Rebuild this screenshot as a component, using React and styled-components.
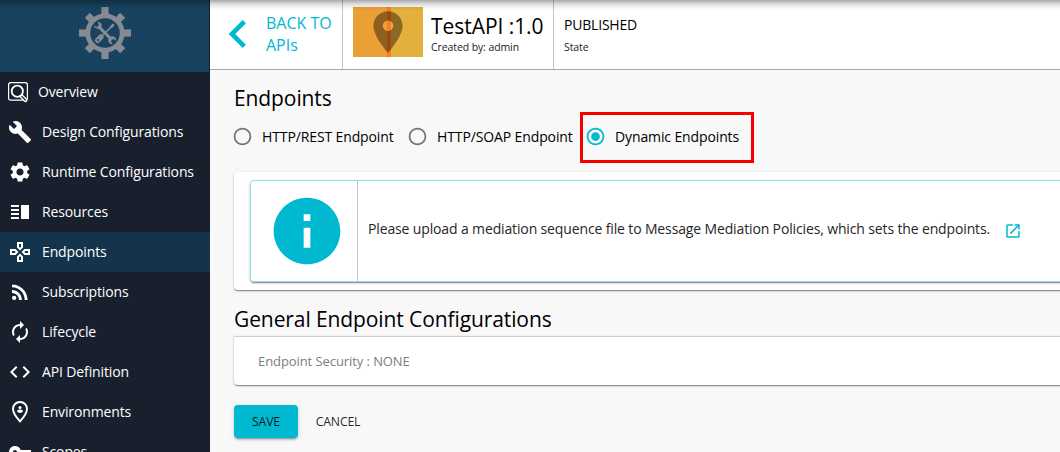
import React from 'react';
import styled, { createGlobalStyle } from 'styled-components';
import {
  MdBuild, MdSettings, MdVerticalSplit, MdOutlineGames, MdRssFeed, MdAutorenew, MdCode,
  MdVpnKey, MdInfo, MdLaunch, MdKeyboardArrowLeft, MdPlace,
  MdRadioButtonChecked, MdRadioButtonUnchecked,
} from 'react-icons/md';

const GlobalStyle = createGlobalStyle`
  * { box-sizing: border-box; }
  body {
    margin: 0;
    overflow: hidden;
    background: #f8f8f8;
    color: #000;
    font-family: "Open Sans", sans-serif;
  }
  svg { display: block; flex: none; }
`;

const Page = styled.div`
  position: relative;
  display: flex;
  height: 452px;
  overflow: hidden;
`;
const TopShade = styled.div`
  position: absolute;
  inset: 0 0 auto 0;
  height: 11px;
  background: linear-gradient(rgba(0, 0, 0, 0.34), rgba(0, 0, 0, 0.14) 35%, rgba(0, 0, 0, 0.03) 75%, transparent);
`;
const Sidebar = styled.nav`
  flex: none;
  width: 210px;
  background: #18202e;
`;
const Brand = styled.div`
  display: flex;
  justify-content: center;
  height: 72px;
  padding-top: 7px;
  background: #18425f;
  border-right: 1px solid #18202e;
`;
const NavItem = styled.a`
  display: flex;
  align-items: center;
  gap: ${(p) => p.$gap || 10}px;
  height: 40px;
  padding-left: 8px;
  font-size: 14px;
  line-height: 20px;
  letter-spacing: -0.13px;
  white-space: nowrap;
  color: #fff;
  background: ${(p) => (p.$active ? '#14344b' : 'transparent')};
`;
const Main = styled.main`
  flex: 1;
  min-width: 0;
`;
const Header = styled.header`
  display: flex;
  height: 70px;
  background: #fff;
  border-bottom: 1px solid #a6a6a6;
`;
const Back = styled.a`
  display: flex;
  align-items: center;
  width: 133px;
  padding-bottom: 2px;
  border-right: 1px solid #c4c4c4;
  color: #00b9d0;
  font-size: 16px;
  line-height: 22px;
`;
const ApiInfo = styled.div`
  display: flex;
  width: 211px;
  padding: 7px 0 0 10px;
  border-right: 1px solid #c4c4c4;
`;
const Thumb = styled.div`
  display: flex;
  justify-content: center;
  width: 70px;
  height: 50px;
  margin-right: 8px;
  background: linear-gradient(90deg, #eba035 34px, #ff7c22 34px 38px, #e4b03d 38px);
`;
const Stack = styled.div`
  display: flex;
  flex-direction: column;
  white-space: nowrap;
`;
const ApiName = styled.div`
  font-size: 21px;
  line-height: 28px;
  letter-spacing: -0.05px;
  margin-top: 5px;
`;
const State = styled.div`
  font-size: 14px;
  line-height: 20px;
  letter-spacing: -0.2px;
  margin-top: 15px;
`;
const Caption = styled.div`
  font-size: 10.5px;
  line-height: 16px;
  letter-spacing: -0.1px;
  margin-top: ${(p) => p.$top || 0}px;
  color: #222;
`;
const StateBox = styled(Stack)`
  padding-left: 10px;
`;
const Content = styled.section`
  padding: 14px 0 0 24px;
`;
const Title = styled.h2`
  margin: ${(p) => p.$top || 0}px 0 0;
  font-size: 21px;
  font-weight: 400;
  line-height: 28px;
  letter-spacing: -0.1px;
`;
const Radios = styled.div`
  display: flex;
  align-items: center;
  height: 48px;
  margin-left: -2px;
`;
const Radio = styled.label`
  display: flex;
  align-items: center;
  gap: 9px;
  width: ${(p) => p.$width}px;
  font-size: 14px;
  letter-spacing: -0.12px;
  white-space: nowrap;
  svg { color: ${(p) => (p.$checked ? '#00b9d0' : '#757575')}; }
`;
const Highlight = styled.div`
  position: absolute;
  left: 580px;
  top: 112px;
  width: 174px;
  height: 51px;
  border: 3px solid #f90000;
`;
const Card = styled.div`
  height: 118px;
  margin-top: 12px;
  margin-right: -10px;
  padding: 8px 0 0 16px;
  background: #fff;
  border-radius: 4px;
  box-shadow: 0 1px 3px rgba(0, 0, 0, 0.2), 0 1px 1px rgba(0, 0, 0, 0.2), 0 2px 1px -1px rgba(0, 0, 0, 0.2);
`;
const Notice = styled.div`
  display: flex;
  align-items: center;
  height: 102px;
  border: 1px solid #84e8ee;
  border-radius: 4px;
  box-shadow: 0 1px 3px rgba(0, 0, 0, 0.2), 0 1px 1px rgba(0, 0, 0, 0.2), 0 2px 1px -1px rgba(0, 0, 0, 0.2);
`;
const NoticeIcon = styled.div`
  display: flex;
  align-items: center;
  justify-content: center;
  width: 107px;
  height: 100%;
  padding-left: 5px;
  border-right: 1px solid #c4c4c4;
  color: #00b9d0;
`;
const NoticeText = styled.p`
  margin: 0 14px 4px 10px;
  font-size: 14px;
  line-height: 20px;
  letter-spacing: -0.137px;
  color: #262626;
  white-space: nowrap;
`;
const Panel = styled.div`
  display: flex;
  align-items: center;
  height: 49px;
  margin: 3px -10px 20px 0;
  padding-left: 24px;
  background: #fff;
  border-top: 1px solid #cfcfcf;
  border-radius: 0 0 4px 4px;
  box-shadow: 0 1px 3px rgba(0, 0, 0, 0.2), 0 1px 1px rgba(0, 0, 0, 0.2), 0 2px 1px -1px rgba(0, 0, 0, 0.2);
  font-size: 13px;
  letter-spacing: -0.08px;
  color: #7d7d7d;
`;
const Actions = styled.div`
  display: flex;
  gap: 10px;
`;
const Button = styled.button`
  height: 33px;
  padding: 0;
  width: ${(p) => (p.$primary ? 64 : 60)}px;
  border: 0;
  border-radius: 4px;
  font: 12.25px/21px "Open Sans", sans-serif;
  letter-spacing: -0.15px;
  color: rgba(0, 0, 0, 0.87);
  background: ${(p) => (p.$primary ? '#00b9d0' : 'transparent')};
  box-shadow: ${(p) => (p.$primary ? '0 3px 1px -2px rgba(0,0,0,.2), 0 2px 2px rgba(0,0,0,.14), 0 1px 5px rgba(0,0,0,.12)' : 'none')};
`;

const GearLogo = () => (
  <svg width="52" height="52" viewBox="-26 -26 52 52" fill="#868b93" stroke="none">
    <circle r="17.2" fill="none" stroke="#868b93" strokeWidth="4.8" />
    {[0, 45, 90, 135, 180, 225, 270, 315].map((a) => (
      <rect key={a} x="-3.6" y={a % 90 ? -25 : -26} width="7.2" height="8" transform={`rotate(${a})`} />
    ))}
    <g transform="rotate(-45)">
      <path d="M-1.5 -7.5 A4 4 0 0 1 -2.4 -13.4 L-1.8 -10 H1.8 L2.4 -13.4 A4 4 0 0 1 1.5 -6.5 V6.5 A4 4 0 0 1 2.4 13.4 L1.8 10 H-1.8 L-2.4 13.4 A4 4 0 0 1 -1.5 6.5 Z" />
    </g>
    <g transform="rotate(45)">
      <path d="M-1.2 -12 L0 -13 L1.2 -12 L1.4 -9 L.8 -7.5 V3 H-.8 V-7.5 L-1.4 -9 Z" />
      <rect x="-2.7" y="3" width="5.4" height="10" rx="2.5" />
      <circle cy="9.8" r="1" fill="#18425f" />
    </g>
  </svg>
);

const OverviewIcon = () => (
  <svg width="21" height="21" viewBox="0 0 21 21" fill="none" stroke="#fff">
    <rect x=".6" y=".6" width="18.8" height="17.6" rx="2.2" strokeWidth="1.2" />
    <path d="M12.8 13.4 L17.4 18.2" stroke="#fff" strokeWidth="4" strokeLinecap="round" />
    <path d="M13.6 14.2 L17.2 18" stroke="#18202e" strokeWidth="1.2" strokeLinecap="round" />
    <circle cx="9.3" cy="9.2" r="5.6" fill="#18202e" strokeWidth="1.8" />
  </svg>
);

const PersonPin = () => (
  <svg width="24" height="24" viewBox="0 0 24 24" fill="#fff">
    <path d="M12 2 C8 2 5 5 5 9 C5 13 8 17 12 21.4 C16 17 19 13 19 9 C19 5 16 2 12 2 Z" fill="none" stroke="#fff" strokeWidth="1.9" />
    <circle cx="12" cy="7.4" r="1.5" />
    <path d="M9 11.3 C9 10.2 10.6 9.6 12 9.6 S15 10.2 15 11.3 C14.3 12.4 13.2 13 12 13 S9.7 12.4 9 11.3 Z" />
  </svg>
);

const items = [
  ['Design Configurations', MdBuild],
  ['Runtime Configurations', MdSettings],
  ['Resources', MdVerticalSplit],
  ['Endpoints', MdOutlineGames],
  ['Subscriptions', MdRssFeed],
  ['Lifecycle', MdAutorenew],
  ['API Definition', MdCode],
  ['Environments', PersonPin],
  ['Scopes', MdVpnKey],
];

export default function App() {
  return (
    <Page>
      <GlobalStyle />
      <Sidebar>
        <Brand><GearLogo /></Brand>
        <NavItem $gap={9}><OverviewIcon />Overview</NavItem>
        {items.map(([label, Icon]) => (
          <NavItem key={label} $active={label === 'Endpoints'}><Icon size={24} />{label}</NavItem>
        ))}
      </Sidebar>
      <Main>
        <Header>
          <Back><MdKeyboardArrowLeft size={56} /><span>BACK TO<br />APIs</span></Back>
          <ApiInfo>
            <Thumb><MdPlace size={50} color="rgba(0,0,0,0.4)" /></Thumb>
            <Stack><ApiName>TestAPI :1.0</ApiName><Caption $top={-1}>Created by: admin</Caption></Stack>
          </ApiInfo>
          <StateBox><State>PUBLISHED</State><Caption $top={4}>State</Caption></StateBox>
        </Header>
        <Content>
          <Title>Endpoints</Title>
          <Radios>
            <Radio $width={175}><MdRadioButtonUnchecked size={21} />HTTP/REST Endpoint</Radio>
            <Radio $width={178}><MdRadioButtonUnchecked size={21} />HTTP/SOAP Endpoint</Radio>
            <Radio $width={160} $checked><MdRadioButtonChecked size={21} />Dynamic Endpoints</Radio>
          </Radios>
          <Card>
            <Notice>
              <NoticeIcon><MdInfo size={80} /></NoticeIcon>
              <NoticeText>Please upload a mediation sequence file to Message Mediation Policies, which sets the endpoints.</NoticeText>
              <MdLaunch size={18} color="#00b9d0" />
            </Notice>
          </Card>
          <Title $top={15}>General Endpoint Configurations</Title>
          <Panel>Endpoint Security : NONE</Panel>
          <Actions><Button $primary>SAVE</Button><Button>CANCEL</Button></Actions>
        </Content>
      </Main>
      <Highlight />
      <TopShade />
    </Page>
  );
}
